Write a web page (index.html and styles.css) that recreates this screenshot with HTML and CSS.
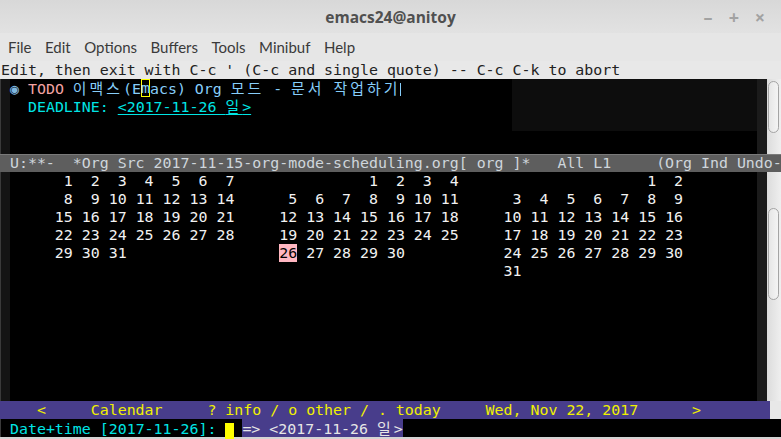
FILE: index.html
```html
<!DOCTYPE html>
<html>
<head>
<meta charset="utf-8">
<link rel="stylesheet" href="styles.css">
</head>
<body>
<div class="frame">
  <div class="titlebar">
    <span></span>
    <span class="title">emacs24@anitoy</span>
    <div class="wctl"><span>–</span><span>+</span><span>×</span></div>
  </div>
  <div class="menubar">
    <span>File</span><span>Edit</span><span>Options</span><span>Buffers</span><span>Tools</span><span>Minibuf</span><span>Help</span>
  </div>
  <div class="headerline">Edit, then exit with C-c ' (C-c and single quote) -- C-c C-k to abort</div>
  <div class="window top">
    <div class="fringe-l"></div>
    <div class="text">
      <div class="line"><span class="bullet">◉</span> <span class="todo">TODO</span> <span class="h1"><span class="ko">이맥스</span>(E<span class="cur">m</span>acs) Org <span class="ko">모드</span> - <span class="ko">문서</span> <span class="ko">작업하기</span></span><span class="bar"></span></div>
      <div class="line">  <span class="kw">DEADLINE:</span> <span class="date">&lt;2017-11-26 <span class="ko">일</span>&gt;</span></div>
    </div>
    <div class="fringe-r"></div>
    <div class="scrollbar"><div class="thumb thumb-top"></div></div>
    <div class="ghost"></div>
  </div>
  <div class="modeline"> U:**-  *Org Src 2017-11-15-org-mode-scheduling.org[ org ]*   All L1     (Org Ind Undo-</div>
  <div class="window bottom">
    <div class="fringe-l"></div>
    <div class="text cal">
      <div class="line">      1  2  3  4  5  6  7               1  2  3  4                     1  2</div>
      <div class="line">      8  9 10 11 12 13 14      5  6  7  8  9 10 11      3  4  5  6  7  8  9</div>
      <div class="line">     15 16 17 18 19 20 21     12 13 14 15 16 17 18     10 11 12 13 14 15 16</div>
      <div class="line">     22 23 24 25 26 27 28     19 20 21 22 23 24 25     17 18 19 20 21 22 23</div>
      <div class="line">     29 30 31                 <span class="today">26</span> 27 28 29 30           24 25 26 27 28 29 30</div>
      <div class="line">                                                       31</div>
    </div>
    <div class="fringe-r"></div>
    <div class="scrollbar"><div class="thumb thumb-bottom"></div></div>
  </div>
  <div class="calmodeline">    &lt;     Calendar     ? info / o other / . today     Wed, Nov 22, 2017      &gt;</div>
  <div class="minibuffer">
    <div class="fringe-l mb"></div>
    <div class="line"><span class="prompt">Date+time [2017-11-26]: </span><span class="blockcur"> </span><span class="gap"></span><span class="preview">=&gt; &lt;2017-11-26 <span class="ko">일</span>&gt;</span></div>
  </div>
</div>
</body>
</html>
```
FILE: styles.css
```css
html, body {
  margin: 0;
  padding: 0;
  background: #e4e4e4;
}
.frame {
  width: 781px;
  height: 439px;
  overflow: hidden;
  display: flex;
  flex-direction: column;
  position: relative;
  font-family: "DejaVu Sans Mono", "Noto Sans CJK KR", monospace;
  font-size: 14.92px;
}
.titlebar {
  height: 33px;
  flex: none;
  display: grid;
  grid-template-columns: 1fr auto 1fr;
  align-items: center;
  background: linear-gradient(#d8d8d8, #e2e2e2);
  font-family: "Open Sans", "Lato", sans-serif;
}
.title {
  font-weight: bold;
  font-size: 15.5px;
  color: #505050;
}
.wctl {
  justify-self: end;
  display: flex;
  padding-right: 8px;
  color: #a2a2a2;
  font-size: 18px;
  font-weight: bold;
}
.wctl span {
  width: 26px;
  text-align: center;
}
.menubar {
  height: 28px;
  flex: none;
  display: flex;
  align-items: center;
  gap: 13.5px;
  padding-left: 8px;
  background: #e6e6e6;
  font-family: "Lato", "Noto Sans", sans-serif;
  font-size: 15px;
  color: #3a3a3a;
}
.headerline {
  height: 18px;
  line-height: 18px;
  flex: none;
  padding-left: 1px;
  background: #e8e8e8;
  color: #222;
  white-space: pre;
  overflow: hidden;
}
.window {
  display: flex;
  background: #000;
  position: relative;
  flex: none;
}
.window.top { height: 75px; }
.window.bottom { height: 229px; }
.fringe-l {
  width: 9px;
  flex: none;
  background: #141414;
  border-left: 1px solid #3a3a3a;
}
.text {
  flex: 1;
  min-width: 0;
  color: #87cefa;
}
.line {
  height: 18px;
  line-height: 18px;
  white-space: pre;
}
.fringe-r {
  width: 10px;
  flex: none;
  background: #1b1b1b;
}
.scrollbar {
  width: 14px;
  flex: none;
  background: linear-gradient(90deg, #dcdcdc, #efefef);
  position: relative;
}
.thumb {
  position: absolute;
  left: 1px;
  width: 9px;
  border: 1px solid #a4a4a4;
  border-radius: 6px;
  background: linear-gradient(90deg, #e6e6e6, #f4f4f4);
}
.thumb-top { top: 2px; height: 50px; }
.thumb-bottom { top: 36px; height: 90px; }
.ghost {
  position: absolute;
  left: 512px;
  top: 0;
  width: 245px;
  height: 52px;
  background: rgba(255, 255, 255, 0.05);
  pointer-events: none;
}
.bullet { color: #7fb8e0; }
.todo { color: #f4a3a3; }
.h1 { color: #87cefa; }
.ko {
  font-family: "Noto Sans CJK KR", sans-serif;
  letter-spacing: 3px;
}
.cur {
  display: inline-block;
  height: 18px;
  box-shadow: inset 0 0 0 1px #ffff00;
  vertical-align: top;
}
.bar {
  display: inline-block;
  width: 1px;
  height: 13px;
  background: #87cefa;
  vertical-align: -2px;
}
.kw { color: #00e5e5; }
.date {
  color: #00e5e5;
  text-decoration: underline;
  text-underline-offset: 2px;
}
.modeline {
  height: 18px;
  line-height: 18px;
  flex: none;
  background: #5e5e5e;
  color: #cfd6dc;
  white-space: pre;
  overflow: hidden;
  padding-left: 1px;
  box-shadow: inset 0 1px 0 #7a7a7a;
}
.cal { color: #f2f2f2; }
.today {
  background: #ffb6c1;
  color: #000;
}
.calmodeline {
  height: 18px;
  line-height: 18px;
  flex: none;
  width: 769px;
  background: #483d8b;
  color: #f0f000;
  white-space: pre;
  overflow: hidden;
  padding-left: 1px;
  box-shadow: 12px 0 0 #e8e8e8;
}
.minibuffer {
  height: 18px;
  flex: none;
  display: flex;
  background: #000;
  border-bottom: 2px solid #d4d4d4;
}
.fringe-l.mb { background: #000; }
.prompt { color: #00e5e5; }
.blockcur {
  display: inline-block;
  width: 9px;
  height: 16px;
  background: #ffff00;
  vertical-align: -3px;
}
.gap {
  display: inline-block;
  width: 8px;
}
.preview {
  background: #483d8b;
  color: #e6e6e6;
  display: inline-block;
  height: 18px;
}
```
